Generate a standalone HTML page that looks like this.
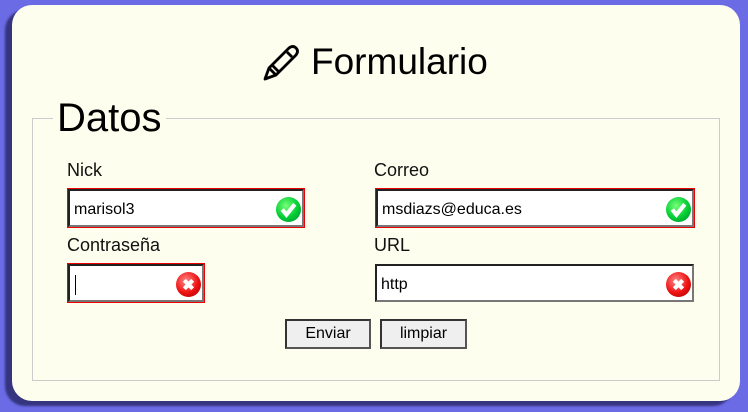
<!DOCTYPE html>
<html><head><meta charset="utf-8"><style>
body{margin:0;width:748px;height:412px;background:#6b6be6;font-family:"Liberation Sans",Arial,sans-serif;position:relative;overflow:hidden}
.card{position:absolute;left:12px;top:5px;width:728px;height:396px;background:#fefeee;border-radius:20px;box-shadow:-7px 5px 2px #35357f}
.a{position:absolute}
.lbl{font-size:18px;color:#111}
.in{position:absolute;box-sizing:border-box;background:#fff;border:2px solid;border-color:#222 #777 #777 #222;font-size:16px;padding:0 0 0 4px;line-height:37px;color:#000}
.red{outline:1px solid #e00;}
.ico{position:absolute;right:1px;top:6px;width:25px;height:25px;border-radius:50%}
.ok{background:radial-gradient(circle at 40% 35%,#7f7,#0c3 55%,#083)}
.x{background:radial-gradient(circle at 40% 35%,#f88,#e11 55%,#900)}
.btn{position:absolute;box-sizing:border-box;height:30px;background:#efefef;border:2px solid;border-color:#333 #555 #555 #333;font-size:16px;text-align:center;line-height:26px}
</style></head><body>
<div class="card"></div>
<svg class="a" style="left:262px;top:44px" width="40" height="38" viewBox="0 0 40 38"><g fill="none" stroke="#000" stroke-width="2.8" stroke-linejoin="round"><path d="M3 35 L7 24 L27 4 Q31 1 34 4 Q37 7 34 11 L14 31 Z"/><path d="M7 24 L14 31 M10 21 L17 28 M25 8 L30 13"/></g></svg>
<div class="a" style="left:311px;top:41px;font-size:37px">Formulario</div>
<div class="a" style="left:32px;top:118px;width:686px;height:261px;border:1px solid #ccc"></div>
<div class="a" style="left:53px;top:96px;font-size:40px;background:#fefeee;padding:0 4px">Datos</div>
<div class="a lbl" style="left:67px;top:160px">Nick</div>
<div class="a lbl" style="left:374px;top:160px">Correo</div>
<div class="a lbl" style="left:67px;top:235px">Contraseña</div>
<div class="a lbl" style="left:374px;top:235px">URL</div>
<div class="in red" style="left:68px;top:189px;width:236px;height:38px">marisol3<svg class="ico ok" viewBox="0 0 24 24"><path d="M6 12l4 5 8-10" stroke="#fff" stroke-width="4" fill="none"/></svg></div>
<div class="in red" style="left:376px;top:189px;width:318px;height:38px">msdiazs@educa.es<svg class="ico ok" viewBox="0 0 24 24"><path d="M6 12l4 5 8-10" stroke="#fff" stroke-width="4" fill="none"/></svg></div>
<div class="in red" style="left:68px;top:264px;width:136px;height:38px"><span style="border-left:1px solid #000;display:inline-block;height:20px;vertical-align:middle;margin-left:1px"></span><svg class="ico x" viewBox="0 0 24 24"><path d="M8 8l8 8M16 8l-8 8" stroke="#fff" stroke-width="4"/></svg></div>
<div class="in" style="left:375px;top:264px;width:319px;height:38px">http<svg class="ico x" viewBox="0 0 24 24"><path d="M8 8l8 8M16 8l-8 8" stroke="#fff" stroke-width="4"/></svg></div>
<div class="btn" style="left:285px;top:319px;width:86px">Enviar</div>
<div class="btn" style="left:380px;top:319px;width:87px">limpiar</div>
</body></html>
